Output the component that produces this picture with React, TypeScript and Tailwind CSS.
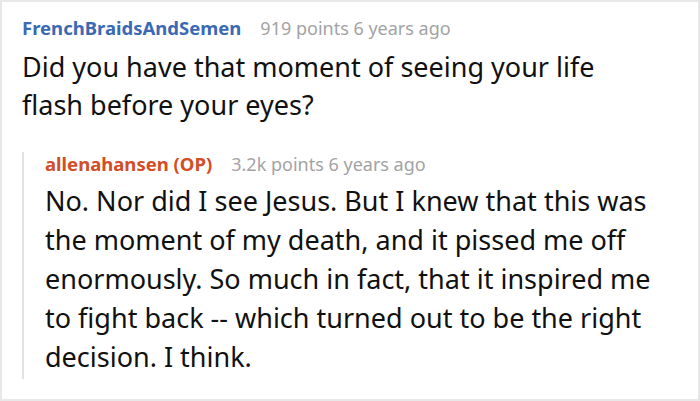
import React from "react";

export default function App() {
  return (
    <div
      className="w-[700px] h-[401px] bg-white border-2 border-[#e8e8e8] pl-[20px] overflow-hidden"
      style={{ fontFamily: '"Noto Sans", sans-serif' }}
    >
      <div className="pt-[14px] flex items-baseline text-[18px] leading-[24px]">
        <span className="font-bold text-[18.5px] text-[#3b69b3]">FrenchBraidsAndSemen</span>
        <span className="ml-[19px] text-[#a3a3a3]">919 points 6 years ago</span>
      </div>
      <p className="mt-[8px] text-[27px] leading-[38px] text-[#111111] w-[640px]">
        Did you have that moment of seeing your life flash before your eyes?
      </p>
      <div className="mt-[28px] border-l-2 border-[#e3e3e3] pl-[21px] pb-[3px]">
        <div className="flex items-baseline text-[18px] leading-[24px]">
          <span className="font-bold text-[18.5px] text-[#d24e27]">allenahansen (OP)</span>
          <span className="ml-[19px] text-[#a3a3a3]">3.2k points 6 years ago</span>
        </div>
        <p className="mt-[5px] text-[27px] leading-[39px] text-[#111111] w-[632px]">
          No. Nor did I see Jesus. But I knew that this was the moment of my death, and it pissed me off enormously. So much in fact, that it inspired me to fight back -- which turned out to be the right decision. I think.
        </p>
      </div>
    </div>
  );
}
